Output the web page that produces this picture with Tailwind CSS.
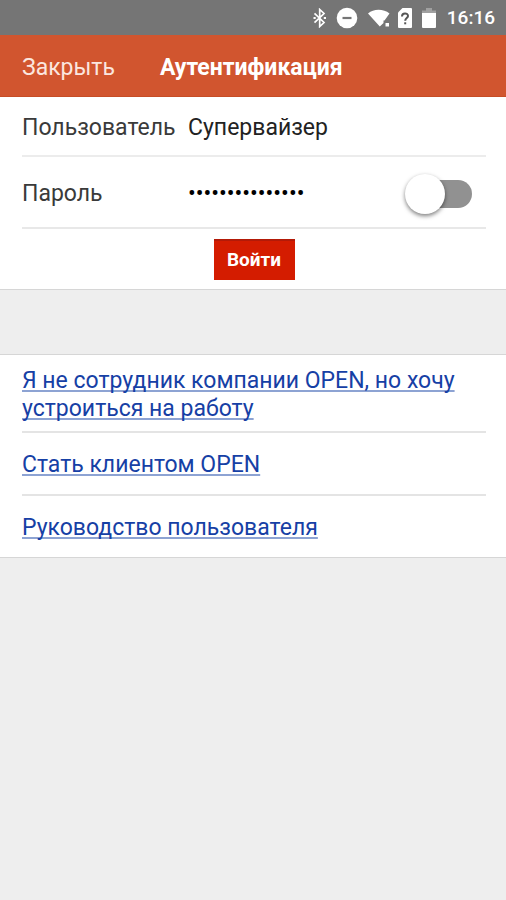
<!DOCTYPE html>
<html lang="ru">
<head>
<meta charset="utf-8">
<meta name="viewport" content="width=device-width, initial-scale=1">
<title>Аутентификация</title>
<script src="https://cdn.jsdelivr.net/npm/@tailwindcss/browser@4"></script>
</head>
<body class="min-h-screen bg-[#eeeeee] font-['Roboto','Noto_Sans',sans-serif] text-[23px] leading-7 text-[#3a3a3a]">
  <div class="flex h-[35px] items-center justify-end bg-[#757575] pr-[11px] text-white">
    <svg class="mr-2 h-5 w-4" viewBox="0 0 16 20" fill="none" stroke="currentColor" stroke-width="1.700" aria-hidden="true">
      <path d="M2.500 5.300l9.500 9.200-4.300 4V1.500l4.300 4-9.500 9.200"/>
      <path d="M1.500 10h2.200M11.800 10h2.200" stroke-width="2.200"/>
    </svg>
    <svg class="mr-2.5 h-[22px] w-[22px]" viewBox="0 0 22 22" aria-hidden="true">
      <circle cx="11" cy="11" r="10.300" fill="currentColor"/>
      <path d="M6.500 11h9" stroke="#757575" stroke-width="2.200"/>
    </svg>
    <svg class="mr-2 h-5 w-[22px]" viewBox="0 0 22 20" fill="currentColor" aria-hidden="true">
      <path d="M0 5.500C3 3 6.500 1.800 10.500 1.800S18.500 3 21.500 5.500L16.500 12.500h-1v2.500L11.800 18.500z"/>
      <path d="M17.500 15h3.500v3.500h-3.500z"/>
    </svg>
    <svg class="mr-2.5 h-5 w-[14px]" viewBox="0 0 14 20" aria-hidden="true">
      <path d="M4.500 0H13a1 1 0 0 1 1 1v18a1 1 0 0 1-1 1H1a1 1 0 0 1-1-1V4.500z" fill="currentColor"/>
      <path d="M4 8.500c0-4 6-4 6-.5 0 2-2.800 2.200-2.800 4.700" fill="none" stroke="#555555" stroke-width="2"/>
      <path d="M6.200 14.300h2v2h-2z" fill="#555555"/>
    </svg>
    <svg class="mr-[11px] h-5 w-[14px]" viewBox="0 0 14 20" aria-hidden="true">
      <path d="M0 2.500h4V0h6v2.500h4V5H0z" fill="#a0a0a0"/>
      <path d="M0 5h14v14a1 1 0 0 1-1 1H1a1 1 0 0 1-1-1z" fill="currentColor"/>
    </svg>
    <span class="text-[19px] font-medium leading-5">16:16</span>
  </div>

  <header class="flex h-[62px] items-center gap-[45px] border-b border-[#c64d26] bg-[#d1552f] pt-1 pr-5 pl-[22px] text-white">
    <button type="button" class="text-[#fbe6df]">Закрыть</button>
    <h1 class="font-bold">Аутентификация</h1>
  </header>

  <main>
    <form class="border-b border-[#d6d6d6] bg-white pr-5 pl-[22px]">
      <div class="flex h-[60px] items-center border-b-2 border-[#ececec] pt-1">
        <label for="user" class="w-[166px] shrink-0">Пользователь</label>
        <input id="user" type="text" value="Супервайзер" class="min-w-0 flex-1 bg-transparent text-[#222222] outline-none">
      </div>
      <div class="flex h-[72px] items-center border-b-2 border-[#e8e8e8] pt-1">
        <label for="password" class="w-[166px] shrink-0">Пароль</label>
        <input id="password" type="password" value="supervisor12345" class="min-w-0 flex-1 bg-transparent text-black outline-none">
        <input type="checkbox" role="switch" aria-label="Показать пароль" class="mr-3.5 flex h-7 w-[61px] shrink-0 appearance-none items-center rounded-full bg-[#919191] before:-ml-1.5 before:h-10 before:w-10 before:rounded-full before:bg-white before:shadow-[0_2px_4px_rgba(0,0,0,0.5)] before:content-['']">
      </div>
      <div class="flex h-[60px] items-center justify-center">
        <button type="submit" class="h-[41px] w-[81px] border-t-2 border-[#b31a08] bg-[#d41c00] text-[19px] font-bold leading-6 text-white">Войти</button>
      </div>
    </form>

    <nav class="mt-16 border-y border-[#d6d6d6] bg-white pr-5 pl-[22px] text-[#1640a5]">
      <div class="border-b-2 border-[#e4e4e4] pt-3 pb-2">
        <a href="#job" class="block underline decoration-[#8da3d3] decoration-2 underline-offset-2 [text-decoration-skip-ink:none]">Я не сотрудник компании OPEN, но хочу устроиться на работу</a>
      </div>
      <div class="border-b-2 border-[#e4e4e4] pt-[18px] pb-[15px]">
        <a href="#client" class="block underline decoration-[#8da3d3] decoration-2 underline-offset-2 [text-decoration-skip-ink:none]">Стать клиентом OPEN</a>
      </div>
      <div class="pt-[18px] pb-[15px]">
        <a href="#manual" class="block underline decoration-[#8da3d3] decoration-2 underline-offset-2 [text-decoration-skip-ink:none]">Руководство пользователя</a>
      </div>
    </nav>
  </main>
</body>
</html>
